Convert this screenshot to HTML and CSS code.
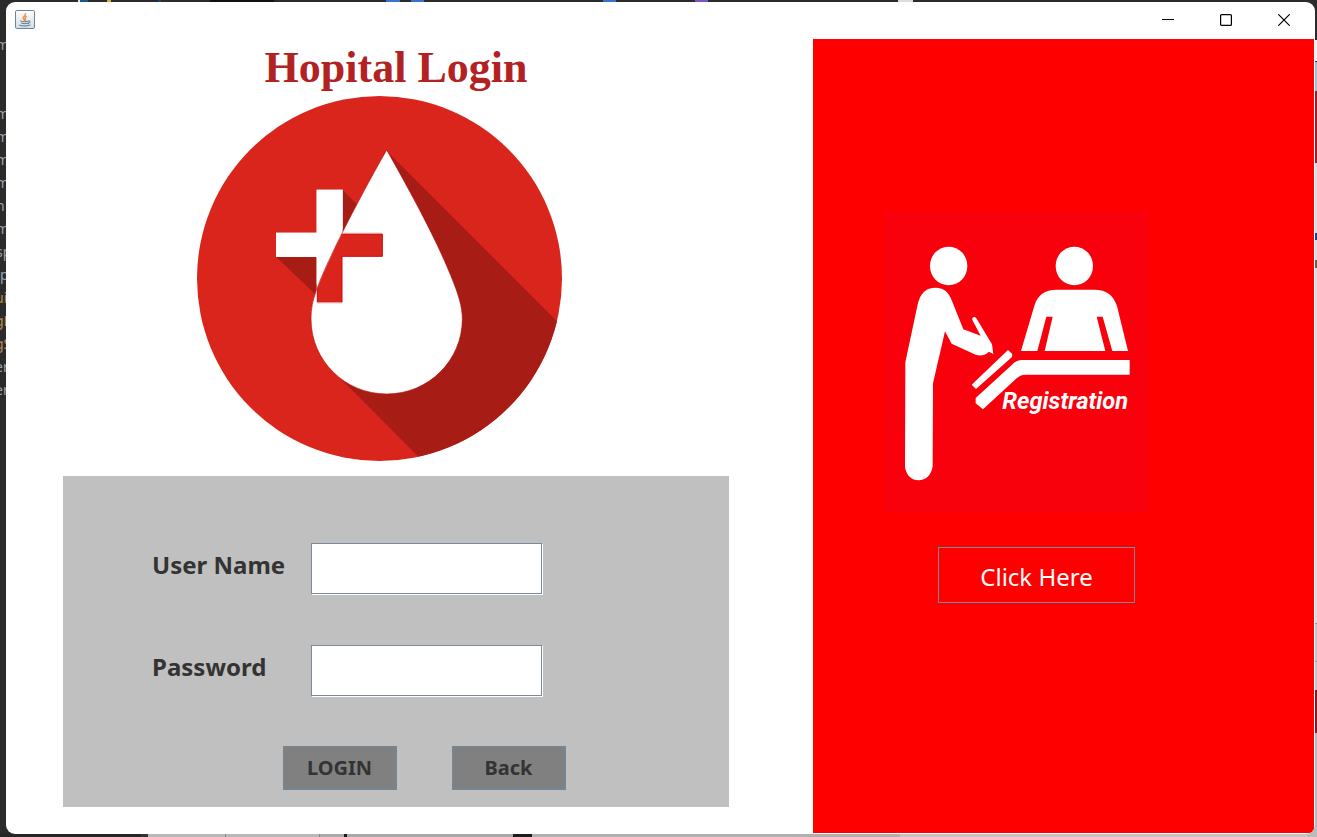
FILE: index.html
```html
<!DOCTYPE html>
<html lang="en">
<head>
<meta charset="utf-8">
<title>Hopital Login</title>
<link rel="stylesheet" href="styles.css">
</head>
<body>
<div class="backdrop" aria-hidden="true">
  <div class="backdrop-top"></div>
  <div class="backdrop-bottom"></div>
  <div class="backdrop-right"></div>
  <div class="code">
    <div>m</div><div></div><div></div><div>m</div><div>m</div><div>m</div><div>m</div><div>n</div><div>m</div>
    <div>sp</div><div class="whole">p</div><div class="pair amber">ui</div><div class="pair amber">gL</div><div class="pair amber">gS</div><div class="pair">er</div><div class="pair">er</div>
  </div>
</div>
<div class="window">
  <header class="titlebar">
    <svg class="app-icon" viewBox="0 0 60 57" role="img" aria-label="Java">
      <defs><linearGradient id="tile" x1="0" y1="0" x2="0" y2="1"><stop offset="0" stop-color="#fdfdfd"/><stop offset="1" stop-color="#d5dde4"/></linearGradient></defs>
      <rect x="1.500" y="1.500" width="57" height="54" rx="4" fill="url(#tile)" stroke="#6d8799" stroke-width="3"/>
      <g fill="none" stroke-linecap="round">
        <path d="M31 11c4 5-8 8-7 13 1 3 4 4 4 7M34 19c-5 3-5 5-3 7 2 3 1 4-1 6" stroke="#ee8b3d" stroke-width="4"/>
        <path d="M17 33c6 3 18 3 25 0M19 39c6 3 16 3 21 0M42 33c6 0 4 7-3 8M14 46c8 3 24 3 31-1" stroke="#527a94" stroke-width="3"/>
      </g>
    </svg>
    <div class="controls">
      <button type="button" aria-label="Minimize"><svg viewBox="0 0 12 12"><path d="M0 5.500H12"/></svg></button>
      <button type="button" aria-label="Maximize"><svg viewBox="0 0 12 12"><rect x=".6" y=".6" width="10.800" height="10.800" rx="1"/></svg></button>
      <button type="button" aria-label="Close"><svg viewBox="0 0 12 12"><path d="M.3.3 11.700 11.700M11.700.3.3 11.700"/></svg></button>
    </div>
  </header>
  <main class="content">
    <section class="login">
      <h1>Hopital Login</h1>
      <svg class="logo" viewBox="21 18 1095 1095" role="img" aria-label="Blood drop with a cross">
        <defs>
          <clipPath id="disc"><circle cx="568.500" cy="565.500" r="547.500"/></clipPath>
          <clipPath id="drop"><path d="M590 183C655 295 735 442 781 556C804 612 815 650 815 687C815 812 714 911 590 911C466 911 365 812 365 687C365 654 370 633 379 604C412 507 530 285 590 183Z"/></clipPath>
        </defs>
        <circle cx="568.500" cy="565.500" r="547.500" fill="#da251d"/>
        <g clip-path="url(#disc)" fill="#a81c16">
          <path d="M590 183 1200 793V1200H785L430 844Z"/>
          <path d="M458 300 520 362 458 480ZM258 500 400 636V500Z"/>
        </g>
        <path d="M380 299H458V428H578V501H458V640H380V501H258V428H380Z" fill="#fff"/>
        <path d="M590 180C655 294 736 442 782 556C805 612 817 650 817 687C817 812 715 912 590 912C465 912 363 812 363 687C363 654 368 633 378 604C411 507 530 284 590 180Z" fill="#fff" stroke="#b80f0b" stroke-width="2"/>
        <g clip-path="url(#drop)">
          <path d="M382 433H577V499H456V637H382Z" fill="#da251d" stroke="#cf0a08" stroke-width="3"/>
          <path d="M382 638H456M458 430H577" stroke="#ed9896" stroke-width="4"/>
        </g>
        <path d="M380 299H458V413L380 585V501H258V428H380Z" fill="#fff"/>
      </svg>
      <form class="panel">
        <div class="field"><label for="user">User Name</label><input id="user" type="text"></div>
        <div class="field"><label for="pass">Password</label><input id="pass" type="password"></div>
        <div class="actions"><button type="button">LOGIN</button><button type="button">Back</button></div>
      </form>
    </section>
    <aside class="register">
      <svg class="poster" viewBox="15 21 786 903" role="img" aria-label="Registration desk">
        <rect x="15" y="21" width="786" height="903" fill="#f9000d"/>
        <g fill="#fff">
          <ellipse cx="206" cy="183" rx="56" ry="58"/>
          <ellipse cx="583" cy="183" rx="56" ry="58"/>
          <path d="M76 472 112 303C120 263 138 248 167 248C193 248 207 263 216 288L250 373 302 392 277 345C275 335 285 333 290 341L336 418 340 447 326 440C317 451 302 454 287 449L215 416 195 379 159 535 158 784C154 811 137 826 116 826C94 826 79 811 75 786Z"/>
          <path d="M423 438 464 299C473 271 494 254 530 254H642C681 254 701 272 711 303L744 438H697L668 335H650L676 438H494L518 335H499L472 438Z"/>
          <path d="M384 435 397 447 396 456 288 552 275 539Z"/>
          <path d="M749 465V509H438C426 509 419 512 410 520L309 613 287 595V579L396 479C407 468 417 465 432 465Z"/>
          <text class="poster-text" x="367" y="611">Registration</text>
        </g>
      </svg>
      <button type="button" class="click">Click Here</button>
    </aside>
  </main>
</div>
</body>
</html>
```

FILE: styles.css
```css
* { box-sizing: border-box; }

body {
  margin: 0;
  height: 100vh;
  min-height: 837px;
  padding: 2px 2px 3px 6px;
  position: relative;
  background: #2b2b2b;
  font-family: "Noto Sans", sans-serif;
  overflow: hidden;
}

/* Desktop area that shows round the window */
.backdrop { position: absolute; inset: 0; overflow: hidden; }

.backdrop-top {
  position: absolute;
  inset: 0 0 auto 0;
  height: 2px;
  background: linear-gradient(90deg,
    #2b2b2b 0 78px, #dde6ec 78px 80px, #14598c 80px 88px, #2b2b2b 88px 107px,
    #e0a63a 107px 111px, #2b2b2b 111px 158px, #14467f 158px 161px, #2b2b2b 161px 210px,
    #111 210px 274px, #2b2b2b 274px 386px, #3b6fd0 386px 400px, #2b2b2b 400px 411px,
    #3b6fd0 411px 424px, #2b2b2b 424px 603px, #3b6fd0 603px 616px, #2b2b2b 616px 695px,
    #7a55c8 695px 708px, #2b2b2b 708px 898px, #ddd 898px 913px, #2b2b2b 913px);
}

.backdrop-bottom {
  position: absolute;
  inset: auto 0 0 0;
  height: 3px;
  background: linear-gradient(90deg,
    #262626 0 141px, #333 141px 148px, #b8b8b8 148px 225px, #888 225px 226px,
    #b8b8b8 226px 319px, #888 319px 320px, #aaa 320px 344px, #1c1c1c 344px 347px,
    #a8a8a8 347px 513px, #1c1c1c 513px 532px, #b0b0b0 532px 900px, #c4c4c4 900px);
}

.backdrop-right {
  position: absolute;
  inset: 0 0 0 auto;
  width: 10px;
  background: linear-gradient(
    #2b2b2b 0 40px, #eee 40px 61px, #333 61px 62px, #a9bfca 62px 91px,
    #a31c20 91px 163px, #ddd 163px 233px, #12488a 233px 240px, #ddd 240px 260px,
    #7b6033 260px 268px, #ddd 268px 623px, #999 623px 624px, #c8c8c8 624px 661px,
    #999 661px 662px, #c8c8c8 662px 690px, #8b1a1c 690px 733px, #bbb 733px);
}

/* Editor text that runs on underneath the window */
.code {
  padding-top: 33px;
  color: #9aa3ad;
  font: 14px/23px "Noto Sans", sans-serif;
}
.code div { height: 23px; margin-left: -4px; }
.code .whole { margin-left: 0; }
.code .pair { margin-left: -5px; }
.code .amber { color: #b98a5a; }

.window {
  position: relative;
  height: 100%;
  padding: 0 1px 1px 0;
  display: flex;
  flex-direction: column;
  background: #fff;
  border-radius: 9px;
  overflow: hidden;
}

.titlebar {
  height: 37px;
  flex: none;
  display: flex;
  justify-content: space-between;
  align-items: center;
  padding: 0 1px 2px 9px;
}
.app-icon { width: 20px; height: 19px; }
.controls { display: flex; height: 100%; }
.controls button {
  width: 58px;
  padding: 0;
  border: 0;
  background: none;
  display: grid;
  place-items: center;
}
.controls svg { width: 12px; height: 12px; fill: none; stroke: #000; stroke-width: 1.2; }

.content {
  flex: 1;
  display: grid;
  grid-template-columns: 807fr 501fr;
}

.login {
  padding: 0 84px 26px 57px;
  display: flex;
  flex-direction: column;
  align-items: center;
}
.login h1 {
  margin: 0;
  padding-top: 4px;
  font: bold 44px/50px "Liberation Serif", serif;
  color: #b22222;
}
.logo { width: 365px; height: 365px; margin: 3px 34px 15px 0; flex: none; }

.panel {
  width: 100%;
  flex: 1;
  padding: 67px 89px 0;
  background: #c0c0c0;
}
.field {
  display: grid;
  grid-template-columns: 159px 231px;
  align-items: center;
  margin-bottom: 51px;
}
.field + .field { margin-bottom: 50px; }
.field label {
  padding-bottom: 8px;
  font-size: 24px;
  line-height: 32px;
  font-weight: bold;
  color: #333;
}
.field input {
  width: 100%;
  height: 51px;
  padding: 4px;
  border: 1px solid #7a8a99;
  background: #fff;
  box-shadow: 1px 1px 0 #fff;
  font: 20px "Noto Sans", sans-serif;
}
.actions { display: flex; gap: 55px; padding-left: 131px; }
.actions button {
  width: 114px;
  height: 44px;
  padding: 0;
  border: 2px solid #748594;
  border-width: 1px 2px 2px 1px;
  background: #808080;
  color: #333;
  font: bold 20px/28px "Noto Sans", sans-serif;
}

.register {
  padding: 173px 72px 0;
  display: flex;
  flex-direction: column;
  align-items: flex-start;
  gap: 34px;
  background: #f00;
}
.poster { width: 262px; height: 301px; }
.poster-text { font: italic bold 71px Roboto, sans-serif; }
.click {
  width: 197px;
  height: 56px;
  margin-left: 53px;
  padding: 4px 0 0;
  border: 1px solid #7a8a99;
  background: none;
  color: #fff;
  font: 24px/32px "Noto Sans", sans-serif;
}
```
